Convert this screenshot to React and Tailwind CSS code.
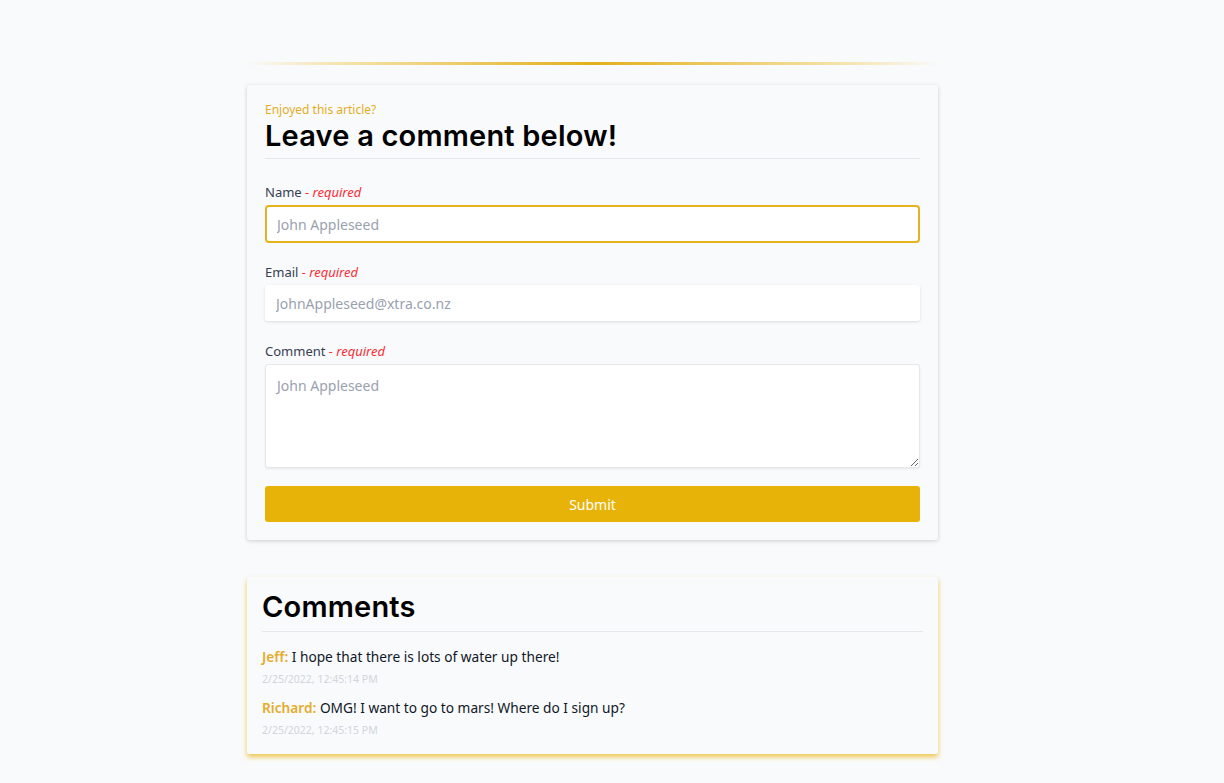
import React, { useState } from "react";

const comments = [
  { name: "Jeff", text: "I hope that there is lots of water up there!", date: "2/25/2022, 12:45:14 PM" },
  { name: "Richard", text: "OMG! I want to go to mars! Where do I sign up?", date: "2/25/2022, 12:45:15 PM" },
];

const Label = ({ children }) => (
  <label className="block text-[13px] leading-5 text-gray-700 mb-[3px]">
    {children} <span className="text-red-500 italic">- required</span>
  </label>
);

const App = () => {
  const [form, setForm] = useState({ name: "", email: "", comment: "" });

  return (
    <div className="min-h-screen bg-[#f9fafb] font-['Noto_Sans',sans-serif] pt-[62px] pb-8">
      <div className="w-[695px] ml-[245px]">
        {/* divider line */}
        <div className="h-[3px] bg-[linear-gradient(90deg,rgba(234,179,8,0)_0%,rgba(234,179,8,0.35)_15%,#e3b01c_50%,rgba(234,179,8,0.35)_85%,rgba(234,179,8,0)_100%)]" />

        {/* comment form */}
        <div className="mt-[20px] ml-[2px] w-[691px] bg-[#f9fafb] shadow-[0_1px_4px_rgba(0,0,0,0.18)] rounded-[3px] px-[18px] pt-[17px] pb-[18px]">
          <p className="text-[12px] leading-4 text-[#e5ac1f]">Enjoyed this article?</p>
          <h2 className="font-['Inter',sans-serif] font-[580] text-[29px] leading-9 text-black tracking-[0.2px]">
            Leave a comment below!
          </h2>
          <div className="h-px bg-gray-200 mt-[4px] mb-[23px]" />

          <Label>Name</Label>
          <input
            placeholder="John Appleseed"
            value={form.name}
            onChange={(e) => setForm({ ...form, name: e.target.value })}
            className="block w-full h-[38px] rounded-[4px] border-2 border-[#e5b320] bg-white px-[10px] text-[14px] text-gray-700 placeholder:text-gray-400 outline-none"
          />

          <div className="mt-[19px]">
            <Label>Email</Label>
            <input
              placeholder="JohnAppleseed@xtra.co.nz"
              value={form.email}
              onChange={(e) => setForm({ ...form, email: e.target.value })}
              className="block w-full h-[36px] rounded-[3px] bg-white px-[11px] text-[14px] text-gray-700 placeholder:text-gray-400 shadow-[0_1px_3px_rgba(0,0,0,0.12)] outline-none"
            />
          </div>

          <div className="mt-[20px]">
            <Label>Comment</Label>
            <textarea
              placeholder="John Appleseed"
              value={form.comment}
              onChange={(e) => setForm({ ...form, comment: e.target.value })}
              className="block w-full h-[104px] rounded-[3px] border border-gray-200 bg-white px-[11px] py-[10px] text-[14px] text-gray-700 placeholder:text-gray-400 shadow-[0_1px_2px_rgba(0,0,0,0.08)] outline-none"
            />
          </div>

          <button className="mt-[18px] w-full h-[36px] rounded-[3px] bg-[#e8b309] text-white text-[14px] font-normal">
            Submit
          </button>
        </div>

        {/* comments */}
        <div className="mt-[37px] ml-[2px] w-[691px] bg-[#f9fafb] rounded-[2px] shadow-[0_3px_5px_rgba(234,179,8,0.7)] px-[15px] pt-[12px] pb-[16px]">
          <h2 className="font-['Inter',sans-serif] font-[580] text-[29px] leading-9 text-black tracking-[0.2px]">
            Comments
          </h2>
          <div className="h-px bg-gray-200 mt-[6px] mb-[15px]" />
          {comments.map((c, i) => (
            <div key={i} className={i > 0 ? "mt-[11px]" : ""}>
              <p className="text-[13.7px] leading-5 text-gray-900">
                <span className="font-semibold text-[#e5ac2c]">{c.name}:</span> {c.text}
              </p>
              <p className="text-[10.5px] leading-4 text-gray-300 mt-[4px]">{c.date}</p>
            </div>
          ))}
        </div>
      </div>
    </div>
  );
};

export default App;
